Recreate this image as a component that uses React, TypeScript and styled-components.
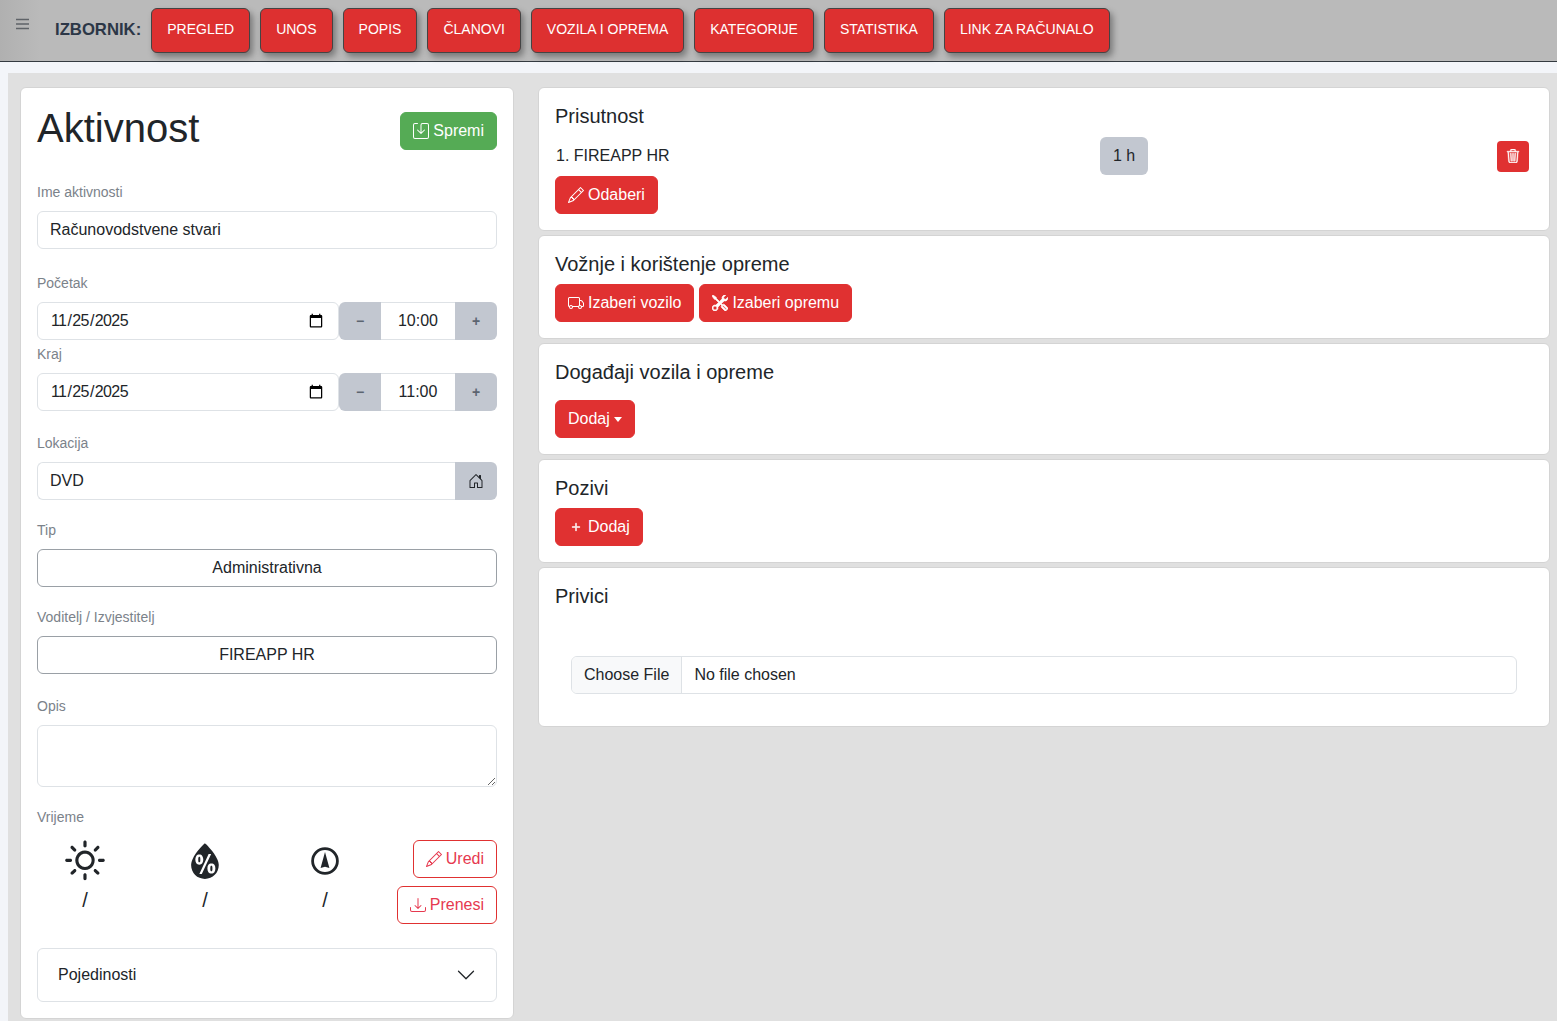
import React from "react";
import styled, { createGlobalStyle } from "styled-components";
import { BsSave, BsPencil, BsTruck, BsTools, BsTrash3, BsHouseDoor, BsDownload, BsPlus } from "react-icons/bs";
import { WiDaySunny, WiHumidity } from "react-icons/wi";

const Global = createGlobalStyle`
  html, body { margin: 0; padding: 0; background: #f3f5f9; }
  body { font-family: "Liberation Sans", Arial, sans-serif; font-size: 16px; line-height: 1.5; color: #212529; overflow: hidden; }
  * { box-sizing: border-box; }
`;

const Page = styled.div`display: flex; flex-direction: column; height: 1021px; overflow: hidden;`;
const NavBar = styled.nav`
  height: 62px; flex: none; display: flex; align-items: flex-start; background: linear-gradient(90deg, #b0b0b0 0, #bababa 40px, #bababa 100%);
  border-bottom: 1px solid #343a40; padding-top: 8px;
`;
const Burger = styled.button`
  width: 14px; height: 12px; margin: 10px 0 0 16px; padding: 0; border: 0; background: none; color: #5f6368; display: flex;
  svg { display: block; }
`;
const NavTitle = styled.span`
  font-size: 16.7px; font-weight: 700; color: #2c3747; margin: 10px 10px 0 25px; line-height: 24px;
`;
const NavButtons = styled.div`display: flex; gap: 10px;`;
const NavButton = styled.button`
  height: 45px; padding: 0 15px 3px; border: 1px solid #444; border-radius: 6px; background: #dd3030; color: #fff;
  font: 400 14px "Liberation Sans", sans-serif; white-space: nowrap; box-shadow: 3px 4px 6px rgba(0,0,0,.35);
`;
const Content = styled.main`
  flex: 1; margin: 11px 0 0 8px; background: #e0e0e0; padding: 14px 7px 0 12px; display: flex; gap: 24px; align-items: flex-start;
`;
const Card = styled.section`
  background: #fff; border-radius: 6px; border: 1px solid #d4d4d4;
`;
const LeftCard = styled(Card)`width: 494px; flex: none; padding: 16px; height: 932px;`;
const RightColumn = styled.div`flex: 1; display: flex; flex-direction: column; gap: 4px;`;
const TitleRow = styled.div`display: flex; justify-content: space-between; align-items: flex-start; height: 78px;`;
const Title = styled.h1`font-size: 40px; font-weight: 400; line-height: 48px; margin: 0;`;
const Button = styled.button<{ $tone?: "red" | "green" | "outline" }>`
  height: 38px; padding: 0 12px; border-radius: 6px; font: 400 16px "Liberation Sans", sans-serif; display: inline-flex; align-items: center; gap: 4px; white-space: nowrap;
  border: 1px solid ${p => p.$tone === "green" ? "#55ab55" : "#e03131"};
  background: ${p => p.$tone === "green" ? "#55ab55" : p.$tone === "outline" ? "#fff" : "#e03131"};
  color: ${p => p.$tone === "outline" ? "#e6394f" : "#fff"};
  svg { flex: none; }
`;
const SaveButton = styled(Button)`margin-top: 8px;`;
const Field = styled.div<{ $top?: number }>`margin-top: ${p => p.$top ?? 0}px;`;
const Label = styled.label`display: block; font-size: 14px; line-height: 21px; color: #7b828a; margin-bottom: 8px;`;
const inputCss = `
  height: 38px; border: 1px solid #dee2e6; border-radius: 6px; font: 400 16px "Liberation Sans", sans-serif; color: #212529; padding: 0 12px; background: #fff; outline: none;
`;
const TextInput = styled.input`${inputCss} width: 100%; display: block;`;
const Group = styled.div`display: flex;`;
const DateInput = styled.input`
  ${inputCss} flex: 1; min-width: 0; border-radius: 6px;
  &::-webkit-datetime-edit { letter-spacing: -0.6px; }
`;
const JoinedInput = styled.input`${inputCss} flex: 1; min-width: 0; border-radius: 6px 0 0 6px; border-right: 0;`;
const Addon = styled.button<{ $side: "left" | "right" }>`
  width: 42px; height: 38px; flex: none; border: 0; background: #c2c7d0; color: #5c6570; padding: 0; display: flex; align-items: center; justify-content: center; font: 700 14px "Liberation Sans", sans-serif;
  border-radius: ${p => p.$side === "left" ? "6px 0 0 6px" : "0 6px 6px 0"};
`;
const TimeValue = styled.input`
  width: 74px; height: 38px; flex: none; border: 0; border-top: 1px solid #dee2e6; border-bottom: 1px solid #dee2e6; text-align: center; font: 400 16px "Liberation Sans", sans-serif; color: #212529; padding: 0; outline: none;
`;
const SelectButton = styled.button`
  width: 100%; height: 38px; display: block; background: #fff; border: 1px solid #9aa0a6; border-radius: 6px; font: 400 16px "Liberation Sans", sans-serif; color: #212529;
`;
const TextArea = styled.textarea`${inputCss} display: block; width: 100%; height: 62px;`;
const WeatherRow = styled.div`display: flex; margin: 12px 0 0 -12px; height: 84px;`;
const WeatherCell = styled.div`width: 120px; display: flex; flex-direction: column; align-items: center; color: #212529;`;
const WeatherIcon = styled.div`height: 42px; display: flex; align-items: center; justify-content: center; overflow: visible; svg { display: block; flex: none; }`;
const WeatherValue = styled.div`margin-top: 6px; line-height: 24px; font-size: 20px;`;
const WeatherActions = styled.div`flex: 1; display: flex; flex-direction: column; align-items: flex-end; gap: 8px;`;
const Accordion = styled.div`
  margin-top: 24px; height: 54px; border: 1px solid #dee2e6; border-radius: 6px; display: flex; align-items: center; justify-content: space-between; padding: 0 20px; font-size: 16px;
`;
const PanelTitle = styled.h5`font-size: 20px; font-weight: 400; line-height: 24px; margin: 0;`;
const Panel = styled(Card)<{ $h: number }>`height: ${p => p.$h}px; padding: 16px 16px 0 16px;`;
const PersonRow = styled.div`display: grid; grid-template-columns: 544px 1fr 32px; align-items: center; height: 38px; margin: 9px 4px 0 1px;`;
const Badge = styled.span`display: inline-flex; width: 48px; height: 38px; align-items: center; justify-content: center; background: #c2c7d0; border-radius: 6px;`;
const IconButton = styled.button`width: 32px; height: 31px; border: 0; border-radius: 4px; background: #e03131; color: #fff; display: flex; align-items: center; justify-content: center; padding: 0;`;
const ButtonRow = styled.div<{ $top?: number }>`display: flex; gap: 5px; margin-top: ${p => p.$top ?? 8}px;`;
const Caret = styled.span`display: inline-block; border-top: 5px solid #fff; border-left: 4px solid transparent; border-right: 4px solid transparent;`;
const FileInput = styled.input`
  ${inputCss} display: block; width: 946px; margin: 48px 0 0 16px; padding: 0; line-height: 36px;
  &::file-selector-button { height: 36px; border: 0; border-right: 1px solid #dee2e6; background: #f8f9fa; color: #212529; padding: 0 12px; margin-right: 12px; font: 400 16px "Liberation Sans", sans-serif; }
`;

const Compass = () => (
  <svg width="30" height="30" viewBox="0 0 30 30" fill="none">
    <circle cx="15" cy="15" r="12.4" stroke="#212529" strokeWidth="2.8" />
    <path d="M15 6 L19.4 22 L15 20.8 L10.6 22 Z" fill="#212529" />
  </svg>
);

const navItems = ["PREGLED", "UNOS", "POPIS", "ČLANOVI", "VOZILA I OPREMA", "KATEGORIJE", "STATISTIKA", "LINK ZA RAČUNALO"];

const TimeGroup = ({ date, time }: { date: string; time: string }) => (
  <Group>
    <DateInput type="date" defaultValue={date} />
    <Addon $side="left">−</Addon>
    <TimeValue defaultValue={time} />
    <Addon $side="right">+</Addon>
  </Group>
);

export default function App() {
  return (
    <Page>
      <Global />
      <NavBar>
        <Burger aria-label="menu">
          <svg width="13" height="12" viewBox="0 0 13 12"><path d="M0 1.5h13M0 6h13M0 10.5h13" stroke="currentColor" strokeWidth="1.3" /></svg>
        </Burger>
        <NavTitle>IZBORNIK:</NavTitle>
        <NavButtons>{navItems.map(n => <NavButton key={n}>{n}</NavButton>)}</NavButtons>
      </NavBar>
      <Content>
        <LeftCard>
          <TitleRow>
            <Title>Aktivnost</Title>
            <SaveButton $tone="green"><BsSave size={16} />Spremi</SaveButton>
          </TitleRow>
          <Field>
            <Label>Ime aktivnosti</Label>
            <TextInput defaultValue="Računovodstvene stvari" />
          </Field>
          <Field $top={24}>
            <Label>Početak</Label>
            <TimeGroup date="2025-11-25" time="10:00" />
          </Field>
          <Field $top={4}>
            <Label>Kraj</Label>
            <TimeGroup date="2025-11-25" time="11:00" />
          </Field>
          <Field $top={22}>
            <Label>Lokacija</Label>
            <Group>
              <JoinedInput defaultValue="DVD" />
              <Addon $side="right"><BsHouseDoor size={16} color="#212529" /></Addon>
            </Group>
          </Field>
          <Field $top={20}>
            <Label>Tip</Label>
            <SelectButton>Administrativna</SelectButton>
          </Field>
          <Field $top={20}>
            <Label>Voditelj / Izvjestitelj</Label>
            <SelectButton>FIREAPP HR</SelectButton>
          </Field>
          <Field $top={22}>
            <Label>Opis</Label>
            <TextArea />
          </Field>
          <Field $top={20}>
            <Label>Vrijeme</Label>
            <WeatherRow>
              <WeatherCell><WeatherIcon><WiDaySunny size={56} /></WeatherIcon><WeatherValue>/</WeatherValue></WeatherCell>
              <WeatherCell><WeatherIcon><WiHumidity size={56} /></WeatherIcon><WeatherValue>/</WeatherValue></WeatherCell>
              <WeatherCell><WeatherIcon><Compass /></WeatherIcon><WeatherValue>/</WeatherValue></WeatherCell>
              <WeatherActions>
                <Button $tone="outline"><BsPencil size={16} />Uredi</Button>
                <Button $tone="outline"><BsDownload size={16} />Prenesi</Button>
              </WeatherActions>
            </WeatherRow>
          </Field>
          <Accordion>
            <span>Pojedinosti</span>
            <svg width="20" height="20" viewBox="0 0 16 16" fill="#212529"><path fillRule="evenodd" d="M1.646 4.646a.5.5 0 0 1 .708 0L8 10.293l5.646-5.647a.5.5 0 0 1 .708.708l-6 6a.5.5 0 0 1-.708 0l-6-6a.5.5 0 0 1 0-.708z" /></svg>
          </Accordion>
        </LeftCard>
        <RightColumn>
          <Panel $h={144}>
            <PanelTitle>Prisutnost</PanelTitle>
            <PersonRow>
              <span>1. FIREAPP HR</span>
              <span><Badge>1 h</Badge></span>
              <IconButton><BsTrash3 size={14} stroke="currentColor" strokeWidth={0.5} /></IconButton>
            </PersonRow>
            <ButtonRow $top={1}><Button><BsPencil size={16} />Odaberi</Button></ButtonRow>
          </Panel>
          <Panel $h={104}>
            <PanelTitle>Vožnje i korištenje opreme</PanelTitle>
            <ButtonRow $top={8}>
              <Button><BsTruck size={16} />Izaberi vozilo</Button>
              <Button><BsTools size={16} stroke="currentColor" strokeWidth={0.6} />Izaberi opremu</Button>
            </ButtonRow>
          </Panel>
          <Panel $h={112}>
            <PanelTitle>Događaji vozila i opreme</PanelTitle>
            <ButtonRow $top={16}><Button>Dodaj<Caret /></Button></ButtonRow>
          </Panel>
          <Panel $h={104}>
            <PanelTitle>Pozivi</PanelTitle>
            <ButtonRow $top={8}><Button><BsPlus size={16} stroke="currentColor" strokeWidth={0.5} />Dodaj</Button></ButtonRow>
          </Panel>
          <Panel $h={160}>
            <PanelTitle>Privici</PanelTitle>
            <FileInput type="file" />
          </Panel>
        </RightColumn>
      </Content>
    </Page>
  );
}
